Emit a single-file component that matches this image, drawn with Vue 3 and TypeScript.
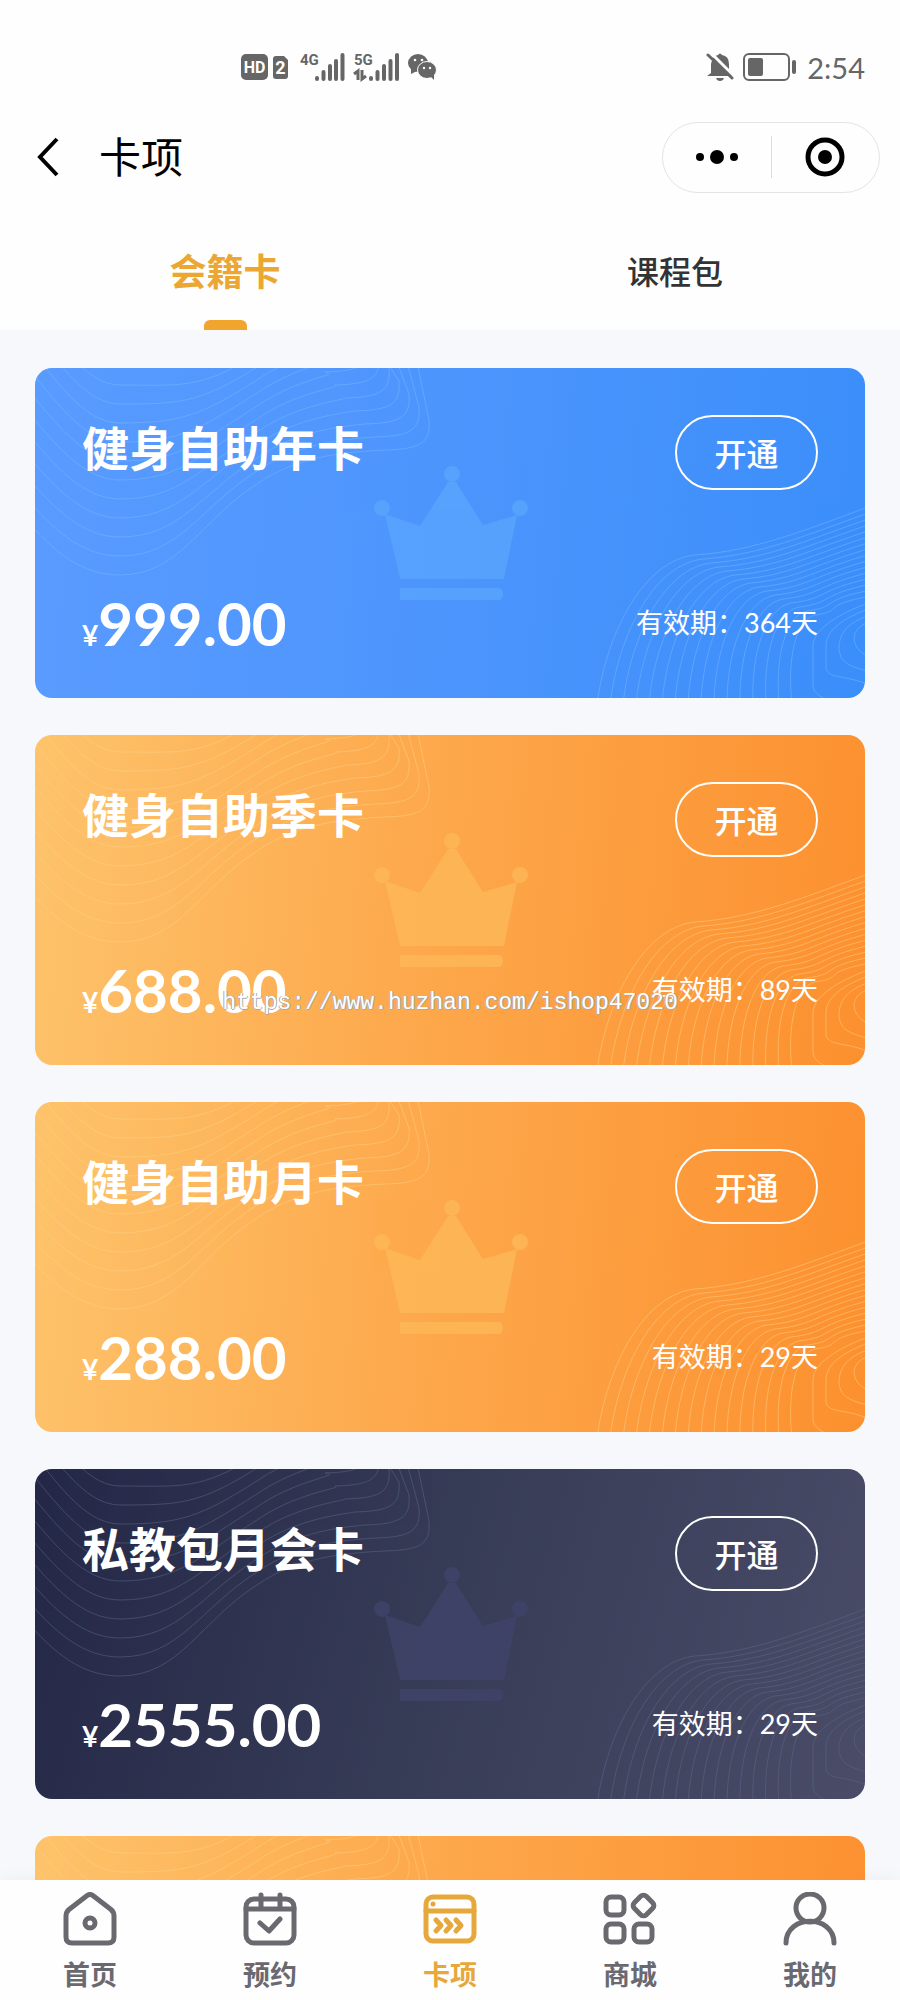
<script setup lang="ts">
import { ref } from 'vue'

type Tone = 'blue' | 'orange' | 'dark'

interface MemberCard {
  tone: Tone
  name?: string
  price?: string
  days?: number
}

const cards: MemberCard[] = [
  { tone: 'blue', name: '健身自助年卡', price: '999.00', days: 364 },
  { tone: 'orange', name: '健身自助季卡', price: '688.00', days: 89 },
  { tone: 'orange', name: '健身自助月卡', price: '288.00', days: 29 },
  { tone: 'dark', name: '私教包月会卡', price: '2555.00', days: 29 },
  { tone: 'orange' },
]

const tabs = ['会籍卡', '课程包']
const activeTab = ref(0)

const navItems = [
  { id: 'home', label: '首页' },
  { id: 'booking', label: '预约' },
  { id: 'cards', label: '卡项' },
  { id: 'shop', label: '商城' },
  { id: 'me', label: '我的' },
]
const activeNav = ref('cards')

// Contour lines hanging from the top left corner of a card.
const topContours = Array.from({ length: 11 }, (_, k) => {
  const bottom = 207 - 19 * k
  const left = 164 - 22 * k
  const ridge = 82 - 13 * k
  const corner = 394 - 10 * k
  return (
    `M-12 ${left - 16}C20 ${left + 22} 48 ${bottom} 85 ${bottom}` +
    `C145 ${bottom} 165 ${ridge + 70} 222 ${ridge + 34}` +
    `C262 ${ridge + 6} 310 ${ridge + 2} ${corner - 44} ${ridge}` +
    `C${corner - 10} ${ridge - 1} ${corner + 2} ${ridge - 6} ${corner} ${ridge - 30}` +
    `L${382 - 10 * k} -6`
  )
})

// Contour lines rising from the bottom right corner of a card.
const bottomContours = Array.from({ length: 16 }, (_, n) => {
  const foot = 562 + 13 * n
  const sx = 660 + 8 * n
  const sy = 187 + 4 * n
  return (
    `M${foot} 336C${foot + 10 - n} ${262 + 2 * n} ${sx - 50 + 2 * n} ${sy + 5} ${sx} ${sy}` +
    `C${sx + 60 - 2 * n} ${sy - 4} ${770 + n} ${162 + 5 * n} 836 ${138 + 6 * n}`
  )
})
</script>

<template>
  <div class="page">
    <header class="top">
      <div class="status">
        <svg class="status-left" viewBox="0 0 200 32" aria-hidden="true">
          <rect x="1" y="3" width="27" height="26" rx="5" />
          <text class="knock" x="14.500" y="22" font-size="16" text-anchor="middle">HD</text>
          <path d="M36 5h8l4 4v16q0 3-3 3h-9q-3 0-3-3V8q0-3 3-3z" />
          <text class="knock" x="40.500" y="23" font-size="18" text-anchor="middle">2</text>
          <text class="net" x="60" y="14" font-size="15">4G</text>
          <g class="bars">
            <path d="M77 28v-1M83.500 28v-7M90 28v-13M96 28V10M102.500 28V4" />
            <path d="M131 28v-1M137.500 28v-7M144 28v-13M150.500 28V10M157 28V4" />
          </g>
          <text class="net" x="114" y="14" font-size="15">5G</text>
          <path class="thin" d="M114 23l4-3v9M122 19v9l4-3" />
          <ellipse cx="178" cy="12" rx="10" ry="9" />
          <path d="M171 17l0 6 6-3z" />
          <ellipse class="bubble" cx="187" cy="19" rx="9.500" ry="8.500" />
          <path d="M190 25l4 4 0-6z" />
          <g class="eye">
            <circle cx="175" cy="9" r="1.300" /><circle cx="182" cy="9" r="1.300" />
            <circle cx="184" cy="17" r="1.200" /><circle cx="190" cy="17" r="1.200" />
          </g>
        </svg>
        <div class="status-right">
          <svg class="bell" viewBox="0 0 28 30" aria-hidden="true">
            <path d="M5 21V12Q6 4 12 3q2-3 4 0 7 1 7 9v8l4 4H1z" />
            <path d="M10 26h8q-1 3-4 3t-4-3z" />
            <path class="cut" d="M4 0l24 24" />
            <path class="slash" d="M2 3l24 23" />
          </svg>
          <svg class="battery" viewBox="0 0 54 28" aria-hidden="true">
            <rect class="shell" x="1" y="1" width="45" height="26" rx="5" />
            <rect x="5" y="5" width="15" height="18" rx="2" />
            <rect x="49" y="7" width="4" height="14" rx="2" />
          </svg>
          <span class="time">2:54</span>
        </div>
      </div>

      <div class="nav">
        <button class="back" type="button" aria-label="返回">
          <svg viewBox="0 0 22 40" aria-hidden="true"><path d="M20 2L3 20l17 18" /></svg>
        </button>
        <h1>卡项</h1>
        <div class="capsule">
          <button type="button" aria-label="更多">
            <svg width="44" height="40" viewBox="0 0 44 40" aria-hidden="true">
              <circle cx="5" cy="20" r="4" /><circle cx="22" cy="20" r="7" /><circle cx="39" cy="20" r="4" />
            </svg>
          </button>
          <span class="divider"></span>
          <button type="button" aria-label="关闭">
            <svg width="40" height="40" viewBox="0 0 40 40" aria-hidden="true">
              <circle class="ring" cx="20" cy="20" r="17" /><circle cx="20" cy="20" r="7" />
            </svg>
          </button>
        </div>
      </div>

      <div class="tabs" role="tablist">
        <button
          v-for="(tab, i) in tabs"
          :key="tab"
          type="button"
          role="tab"
          :aria-selected="activeTab === i"
          :class="['tab', { active: activeTab === i }]"
          @click="activeTab = i"
        >
          {{ tab }}
        </button>
      </div>
    </header>

    <main class="list">
      <article v-for="(card, i) in cards" :key="i" :class="['card', card.tone]">
        <svg class="art" viewBox="0 0 830 330" preserveAspectRatio="xMidYMid slice" aria-hidden="true">
          <g class="contours">
            <path v-for="d in topContours" :key="d" :d="d" />
          </g>
          <g class="contours strong">
            <path v-for="d in bottomContours" :key="d" :d="d" />
            <path d="M802 336q-24-8-24-18V278C778 262 802 246 836 234" />
            <path d="M836 318C812 306 793 312 791 300V278C791 262 808 250 836 240" />
            <path d="M836 304C812 298 805 294 804 280C804 262 818 252 836 247" />
            <path d="M836 290C812 280 815 258 836 254" />
          </g>
          <g class="crown">
            <path d="M350 146l35 12 28-44h8l27 43 34-10-13 64H365z" />
            <circle cx="347" cy="140" r="8" />
            <circle cx="417" cy="106" r="8" />
            <circle cx="485" cy="140" r="8" />
            <path d="M365 220h98q5 0 5 6t-5 6h-98z" />
          </g>
        </svg>
        <template v-if="card.name">
          <div class="row head">
            <h2>{{ card.name }}</h2>
            <button class="open" type="button">开通</button>
          </div>
          <div class="row foot">
            <p class="price"><span>¥</span>{{ card.price }}</p>
            <p class="valid">有效期：{{ card.days }}天</p>
          </div>
        </template>
      </article>
    </main>

    <nav class="tabbar">
      <a
        v-for="item in navItems"
        :key="item.id"
        href="#"
        :class="{ active: activeNav === item.id }"
        @click.prevent="activeNav = item.id"
      >
        <svg viewBox="0 0 54 54" aria-hidden="true">
          <template v-if="item.id === 'home'">
            <path d="M23.500 4Q27 1 30.500 4L48 17.500Q51 20 51 24V45Q51 51 45 51H9Q3 51 3 45V24Q3 20 6 17.500Z" />
            <circle cx="27" cy="31" r="5" />
          </template>
          <template v-else-if="item.id === 'booking'">
            <rect x="3" y="7" width="48" height="44" rx="8" />
            <path d="M3 17h48M18 3v14M37 3v14M17 31l9 8 11-12" />
          </template>
          <template v-else-if="item.id === 'cards'">
            <rect x="3" y="5" width="48" height="44" rx="7" />
            <path d="M3 19h48M13 28l5 5.500-5 5.500M23 28l5 5.500-5 5.500M33 28l5 5.500-5 5.500" />
            <circle class="dot" cx="10" cy="12" r="2.500" />
          </template>
          <template v-else-if="item.id === 'shop'">
            <rect x="3" y="5" width="18" height="18" rx="5" />
            <rect x="3" y="32" width="18" height="18" rx="5" />
            <rect x="31" y="32" width="18" height="18" rx="5" />
            <rect x="32" y="5" width="17" height="17" rx="4" transform="rotate(45 40.500 13.500)" />
          </template>
          <template v-else>
            <circle cx="27" cy="16" r="14" />
            <path d="M3 51C3 22 51 22 51 51" />
          </template>
        </svg>
        <span>{{ item.label }}</span>
      </a>
    </nav>

    <div class="watermark">https://www.huzhan.com/ishop47020</div>
  </div>
</template>

<style>
body {
  margin: 0;
}
</style>

<style scoped>
.page {
  position: relative;
  display: flex;
  flex-direction: column;
  height: 100vh;
  background: #f6f8fb;
  font-family: Lato, 'Noto Sans CJK SC', sans-serif;
}
button {
  padding: 0;
  border: 0;
  background: none;
  font-family: inherit;
  cursor: pointer;
}
h1,
h2,
p {
  margin: 0;
}
.top {
  flex: none;
  background: #fefefe;
}
.status {
  display: flex;
  align-items: center;
  justify-content: space-between;
  height: 66px;
  padding: 34px 35px 0 240px;
  fill: #666;
  color: #666;
}
.status-left {
  width: 200px;
  height: 32px;
}
.status-left text {
  font-family: 'Liberation Sans Narrow', Roboto, sans-serif;
  font-weight: 700;
}
.status-left .knock,
.eye {
  fill: #fff;
}
.bars {
  stroke: #666;
  stroke-width: 4;
  stroke-linecap: round;
}
.thin {
  fill: none;
  stroke: #666;
  stroke-width: 3;
}
.bubble {
  stroke: #fefefe;
  stroke-width: 1;
}
.status-right {
  display: flex;
  align-items: center;
}
.bell {
  width: 28px;
  height: 30px;
  margin-right: 9px;
}
.cut {
  stroke: #fefefe;
  stroke-width: 3;
}
.slash {
  stroke: #666;
  stroke-width: 3;
  stroke-linecap: round;
}
.battery {
  width: 54px;
  height: 28px;
  margin-right: 10px;
}
.shell {
  fill: none;
  stroke: #666;
  stroke-width: 2;
}
.time {
  padding-top: 2px;
  font-size: 29px;
  line-height: 34px;
}
.nav {
  display: flex;
  align-items: center;
  height: 114px;
  padding: 0 20px 0 37px;
}
.back {
  width: 22px;
  height: 40px;
  margin-right: 40px;
}
.back svg {
  display: block;
  fill: none;
  stroke: #000;
  stroke-width: 4;
}
h1 {
  font-size: 42px;
  line-height: 48px;
  font-weight: 400;
  color: #000;
}
.capsule {
  display: flex;
  align-items: center;
  box-sizing: border-box;
  width: 218px;
  height: 71px;
  margin-left: auto;
  border: 1px solid #e4e4e4;
  border-radius: 36px;
}
.capsule button {
  display: grid;
  flex: 1;
  place-items: center;
}
.ring {
  fill: none;
  stroke: #000;
  stroke-width: 5;
}
.divider {
  width: 1px;
  height: 42px;
  background: #ddd;
}
.tabs {
  display: flex;
  height: 116px;
}
.tab {
  position: relative;
  flex: 1;
  padding-bottom: 5px;
  font-size: 32px;
  font-weight: 500;
  color: #333;
}
.tab.active {
  font-size: 37px;
  font-weight: 700;
  color: #eba731;
}
.tab.active::after {
  content: '';
  position: absolute;
  bottom: 0;
  left: 50%;
  width: 43px;
  height: 10px;
  margin-left: -21px;
  border-radius: 6px 6px 0 0;
  background: #f2a52c;
}
.list {
  display: flex;
  flex: 1;
  flex-direction: column;
  gap: 37px;
  min-height: 0;
  padding: 38px 35px 0;
  overflow-y: auto;
  scrollbar-width: none;
}
.card {
  position: relative;
  display: flex;
  flex: none;
  flex-direction: column;
  justify-content: space-between;
  box-sizing: border-box;
  min-height: 330px;
  padding: 47px 47px 45px;
  border-radius: 17px;
  overflow: hidden;
  color: #fff;
}
.blue {
  --mark: #59a5fd;
  --line: #7ab8ff;
  background: linear-gradient(95deg, #5a9bff, #4c95fd 50%, #3b8efa);
}
.orange {
  --mark: #fdb858;
  --line: #ffd287;
  background: linear-gradient(95deg, #fdc36b, #fda94d 45%, #fc902f);
}
.dark {
  --mark: #40446a;
  --line: #60698a;
  background: linear-gradient(105deg, #242847, #373c57 50%, #4a4c68);
}
.art {
  position: absolute;
  inset: 0;
  width: 100%;
  height: 100%;
}
.contours {
  fill: none;
  stroke: var(--line);
  stroke-width: 1;
  opacity: 0.5;
}
.crown {
  fill: var(--mark);
  opacity: 0.8;
}
.row {
  position: relative;
  display: flex;
  justify-content: space-between;
}
.head {
  align-items: flex-start;
}
.foot {
  align-items: center;
}
h2 {
  font-size: 47px;
  line-height: 66px;
  font-weight: 700;
}
.open {
  box-sizing: border-box;
  width: 143px;
  height: 75px;
  padding-bottom: 2px;
  border: 2px solid #fff;
  border-radius: 38px;
  font-size: 32px;
  font-weight: 500;
  color: #fff;
}
.price {
  font-size: 60px;
  line-height: 60px;
  font-weight: 700;
}
.price span {
  font-size: 28px;
  line-height: 28px;
}
.valid {
  font-size: 27px;
  line-height: 36px;
}
.tabbar {
  display: flex;
  flex: none;
  height: 120px;
  background: #fefefe;
  box-shadow: 0 -2px 16px rgba(0, 0, 0, 0.04);
}
.tabbar a {
  display: flex;
  flex: 1;
  flex-direction: column;
  align-items: center;
  gap: 13px;
  padding-top: 12px;
  font-size: 27px;
  line-height: 32px;
  font-weight: 700;
  color: #6a6970;
  text-decoration: none;
}
.tabbar a.active {
  color: #e7a83b;
}
.tabbar svg {
  width: 54px;
  height: 54px;
  fill: none;
  stroke: currentColor;
  stroke-width: 5;
  stroke-linecap: round;
  stroke-linejoin: round;
}
.tabbar .dot {
  fill: currentColor;
  stroke: none;
}
.watermark {
  position: absolute;
  inset: 0;
  display: grid;
  place-items: center;
  padding-top: 6px;
  pointer-events: none;
  font-family: 'Liberation Mono', monospace;
  font-size: 23px;
  color: #fff;
  text-shadow:
    1px 0 0 #aaa,
    -1px 0 0 #aaa,
    0 1px 0 #aaa;
}
</style>
